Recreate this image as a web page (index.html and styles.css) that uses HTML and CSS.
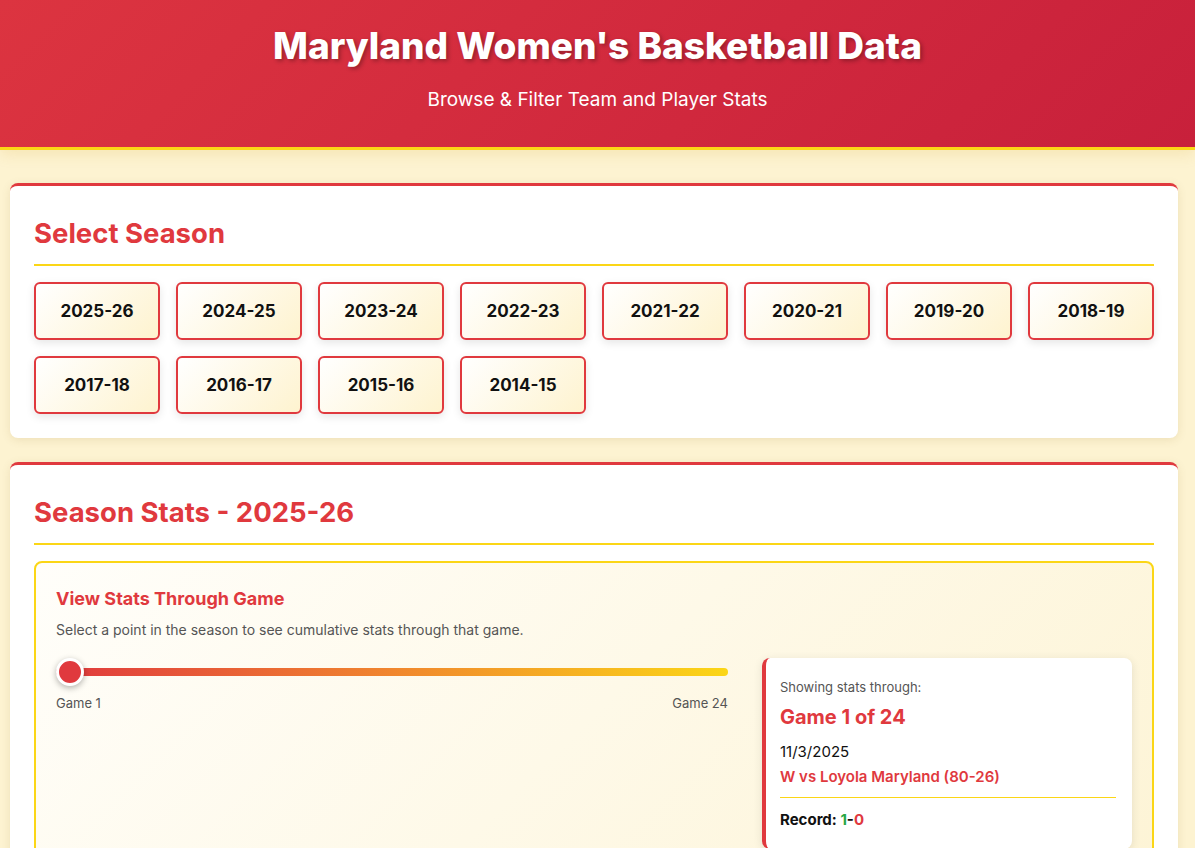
FILE: index.html
```html
<!DOCTYPE html>
<html lang="en">

<head>
    <meta charset="UTF-8">
    <meta name="viewport" content="width=device-width, initial-scale=1.0">
    <title>Maryland Women's Basketball Data</title>
    <link rel="stylesheet" href="styles.css">
</head>

<body>
    <header class="site-header">
        <h1>Maryland Women's Basketball Data</h1>
        <p>Browse &amp; Filter Team and Player Stats</p>
    </header>

    <main class="container">
        <section class="card">
            <h2 class="card-title">Select Season</h2>
            <div class="season-grid">
                <button class="season-btn">2025-26</button>
                <button class="season-btn">2024-25</button>
                <button class="season-btn">2023-24</button>
                <button class="season-btn">2022-23</button>
                <button class="season-btn">2021-22</button>
                <button class="season-btn">2020-21</button>
                <button class="season-btn">2019-20</button>
                <button class="season-btn">2018-19</button>
                <button class="season-btn">2017-18</button>
                <button class="season-btn">2016-17</button>
                <button class="season-btn">2015-16</button>
                <button class="season-btn">2014-15</button>
            </div>
        </section>

        <section class="card">
            <h2 class="card-title">Season Stats - 2025-26</h2>
            <div class="through-box">
                <h3>View Stats Through Game</h3>
                <p class="hint">Select a point in the season to see cumulative stats through that game.</p>
                <div class="through-grid">
                    <div class="slider-wrap">
                        <input type="range" class="game-slider" min="1" max="24" value="1">
                        <div class="slider-labels">
                            <span>Game 1</span>
                            <span>Game 24</span>
                        </div>
                    </div>
                    <div class="game-info">
                        <div class="info-label">Showing stats through:</div>
                        <div class="info-game">Game 1 of 24</div>
                        <div class="info-date">11/3/2025</div>
                        <div class="info-result">W vs Loyola Maryland (80-26)</div>
                        <div class="info-record">Record: <span class="wins">1</span>-<span class="losses">0</span></div>
                    </div>
                </div>
            </div>
        </section>
    </main>
</body>

</html>
```

FILE: styles.css
```css
* {
    box-sizing: border-box;
}

body {
    margin: 0;
    font-family: "Inter", "Liberation Sans", sans-serif;
    background: #fdf3d1;
    color: #111;
}

/* Header */
.site-header {
    background: linear-gradient(135deg, #dc3440, #c8203b);
    color: #fff;
    text-align: center;
    padding: 24px 20px 36px;
    border-bottom: 3px solid #fbd616;
    box-shadow: 0 4px 14px rgba(200, 150, 0, 0.15);
}

.site-header h1 {
    margin: 0;
    font-size: 37px;
    line-height: 43px;
    font-weight: 800;
    text-shadow: 2px 2px 4px rgba(0, 0, 0, 0.3);
}

.site-header p {
    margin: 22px 0 0;
    font-size: 19px;
    line-height: 22px;
}

.container {
    padding: 33px 17px 0 10px;
}

/* Cards */
.card {
    background: #fff;
    border-top: 3px solid #e0393e;
    border-radius: 8px;
    padding: 30px 24px 24px;
    margin-bottom: 24px;
    box-shadow: 0 2px 10px rgba(120, 90, 0, 0.12);
}

.card-title {
    margin: 0 0 16px;
    padding-bottom: 14px;
    border-bottom: 2px solid #fbd616;
    color: #e0393e;
    font-size: 27.5px;
    line-height: 34px;
    font-weight: 700;
}

.season-grid {
    display: grid;
    grid-template-columns: repeat(8, 1fr);
    gap: 16px;
}

.season-btn {
    height: 58px;
    border: 2px solid #e0393e;
    border-radius: 6px;
    background: linear-gradient(135deg, #ffffff, #fef3cf);
    font-family: inherit;
    font-size: 17px;
    font-weight: 700;
    color: #111;
    cursor: pointer;
    box-shadow: 0 3px 8px rgba(0, 0, 0, 0.1);
}

/* Through game box */
.through-box {
    border: 2px solid #fbd616;
    border-radius: 8px;
    padding: 25px 20px 0;
    min-height: 300px;
    background: linear-gradient(135deg, #fffefa, #fdf4d6);
}

.through-box h3 {
    margin: 0 0 10px;
    color: #e0393e;
    font-size: 18px;
    line-height: 22px;
    font-weight: 700;
}

.hint {
    margin: 0 0 18px;
    font-size: 14px;
    line-height: 20px;
    color: #555;
}

.through-grid {
    display: grid;
    grid-template-columns: 1fr 370px;
    gap: 34px;
    align-items: start;
}

.game-slider {
    -webkit-appearance: none;
    appearance: none;
    display: block;
    width: 100%;
    height: 28px;
    margin: 0;
    background: transparent;
}

.game-slider::-webkit-slider-runnable-track {
    height: 8px;
    border-radius: 4px;
    background: linear-gradient(90deg, #e0393e, #f0862e, #fbd616);
}

.game-slider::-webkit-slider-thumb {
    -webkit-appearance: none;
    width: 28px;
    height: 28px;
    margin-top: -10px;
    border-radius: 50%;
    background: #e0393e;
    border: 3px solid #fff;
    box-shadow: 0 2px 6px rgba(0, 0, 0, 0.3);
}

.slider-labels {
    display: flex;
    justify-content: space-between;
    margin-top: 9px;
    font-size: 13px;
    color: #555;
}

/* Game info panel */
.game-info {
    background: #fff;
    border-left: 4px solid #e0393e;
    border-radius: 8px;
    padding: 20px 16px 20px 14px;
    box-shadow: 0 2px 10px rgba(0, 0, 0, 0.1);
}

.info-label {
    font-size: 13px;
    color: #555;
    line-height: 18px;
}

.info-game {
    margin-top: 8px;
    font-size: 20px;
    line-height: 26px;
    font-weight: 700;
    color: #e0393e;
}

.info-date {
    margin-top: 12px;
    font-size: 15px;
    line-height: 20px;
}

.info-result {
    margin-top: 5px;
    padding-bottom: 10px;
    border-bottom: 1px solid #fbd616;
    font-size: 15px;
    line-height: 20px;
    font-weight: 600;
    color: #e0393e;
}

.info-record {
    margin-top: 12px;
    font-size: 15px;
    font-weight: 700;
}

.wins {
    color: #28a745;
}

.losses {
    color: #e0393e;
}
```
